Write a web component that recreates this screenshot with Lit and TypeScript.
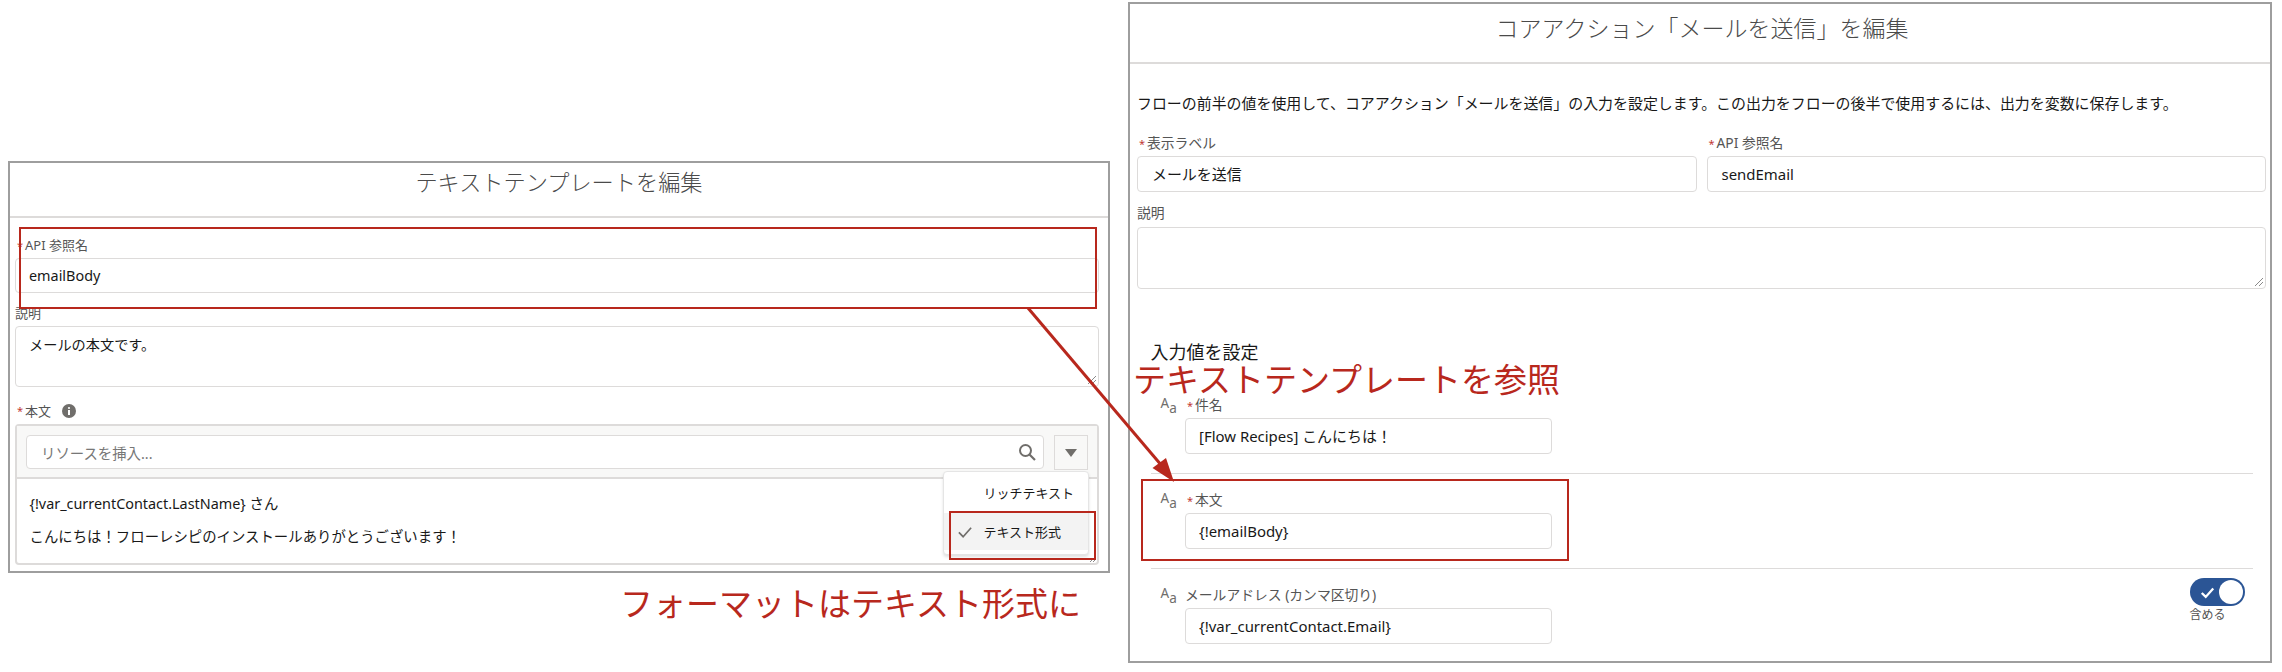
import { LitElement, html, css, svg } from "lit";
import { customElement } from "lit/decorators.js";

const check = (color: string, w: number) => svg`<path d="M2 8.5 L6.5 13 L15 3.5" fill="none" stroke=${color} stroke-width=${w} />`;

@customElement("app-root")
export class AppRoot extends LitElement {
  static styles = css`
    :host {
      display: block;
      font-family: "Noto Sans", "Noto Sans CJK JP", sans-serif;
      color: #181818;
    }
    * {
      box-sizing: border-box;
    }
    .page {
      position: relative;
      display: flex;
      align-items: flex-start;
      width: 2282px;
      height: 672px;
      overflow: hidden;
      background: #fff;
    }
    .left-col {
      width: 1102px;
      margin: 161px 0 0 8px;
    }
    .panel {
      border: 2px solid #9e9e9e;
      background: #fff;
    }
    .left-panel {
      height: 412px;
      font-size: 14.4px;
    }
    .right-panel {
      width: 1144px;
      height: 661px;
      margin: 2px 0 0 18px;
      font-size: 14.95px;
    }
    .head {
      border-bottom: 2px solid #dddbda;
      text-align: center;
      line-height: 40px;
      color: #4a4a4a;
      font-weight: 300;
    }
    .left-panel .head {
      height: 55px;
      font-size: 22.2px;
    }
    .right-panel .head {
      height: 60px;
      padding: 4px 0 0 4px;
      font-size: 23px;
    }
    .left-body {
      padding: 18px 9px 0 5px;
    }
    .right-body {
      padding: 29px 4px 0 7px;
    }
    .label {
      height: 18px;
      line-height: 18px;
      font-size: 13px;
      color: #555;
      white-space: nowrap;
    }
    .right-panel .label {
      font-size: 13.8px;
    }
    .star {
      display: inline-block;
      width: 8px;
      margin-left: 2px;
      color: #c23934;
      font-size: 11px;
    }
    .input {
      display: flex;
      align-items: center;
      height: 36px;
      margin-top: 4px;
      padding: 0 0 1px 14px;
      border: 1px solid #dddbda;
      border-radius: 4px;
      background: #fff;
      white-space: nowrap;
    }
    .left-panel .input {
      height: 35px;
      padding: 0 0 0 13px;
    }
    .field .input {
      padding-left: 13px;
    }
    .area {
      position: relative;
      height: 61px;
      margin-top: 4px;
      padding: 8px 13px;
      font-size: 14.2px;
      line-height: 20px;
      border: 1px solid #dddbda;
      border-radius: 4px;
    }
    .right-panel .area {
      height: 62px;
      margin-top: 5px;
    }
    .grip {
      position: absolute;
      right: 1px;
      bottom: 1px;
      width: 10px;
      height: 10px;
    }
    .after-input {
      margin-top: 11px;
    }
    .after-area {
      margin-top: 15px;
      display: flex;
      align-items: center;
    }
    .info {
      width: 14px;
      height: 14px;
      margin-left: 11px;
    }
    .editor {
      position: relative;
      height: 141px;
      margin-top: 4px;
      border: 2px solid #dddbda;
      border-radius: 4px;
    }
    .toolbar {
      display: flex;
      gap: 10px;
      height: 53px;
      padding: 9px 9px 0;
      background: #f8f8f7;
      border-bottom: 2px solid #dddbda;
    }
    .search {
      flex: 1;
      display: flex;
      align-items: center;
      justify-content: space-between;
      height: 34px;
      padding: 0 7px 0 14px;
      background: #fff;
      border: 1px solid #dddbda;
      border-radius: 4px;
      color: #777;
    }
    .search svg {
      width: 18px;
      height: 18px;
    }
    .more {
      display: flex;
      align-items: center;
      justify-content: center;
      width: 34px;
      height: 35px;
      border: 1px solid #dddbda;
    }
    .more svg {
      width: 12px;
      height: 8px;
    }
    .text {
      padding: 8px 0 0 12.5px;
      line-height: 33px;
      white-space: nowrap;
    }
    .menu {
      position: absolute;
      top: 45px;
      right: 8px;
      width: 146px;
      height: 84px;
      background: #fff;
      border: 1px solid #e5e5e5;
      border-radius: 4px;
      box-shadow: 0 2px 3px rgba(0, 0, 0, 0.12);
      font-size: 13px;
    }
    .menu-item {
      display: flex;
      align-items: center;
      gap: 11px;
      height: 41px;
      padding-left: 12.5px;
    }
    .menu-item svg,
    .menu-item .slot {
      width: 16px;
      height: 16px;
      flex: none;
    }
    .menu-item.on {
      height: 37px;
      background: #f3f3f3;
    }
    .corner {
      position: absolute;
      right: 0;
      bottom: 0;
      width: 8px;
      height: 8px;
    }
    .two {
      display: grid;
      grid-template-columns: 1fr 1fr;
      gap: 0 10px;
      margin-top: 21px;
    }
    .intro {
      line-height: 20px;
      white-space: nowrap;
    }
    .desc-label {
      margin-top: 12px;
    }
    .section {
      margin: 52px 0 0 13.5px;
      font-size: 18px;
      line-height: 22px;
    }
    .rows {
      margin: 33px 0 0 13.5px;
      width: 1102px;
    }
    .row {
      display: flex;
      padding-left: 10px;
      height: 95px;
      padding-top: 17px;
      border-bottom: 1px solid #dddbda;
    }
    .row:first-child {
      height: 78px;
      padding-top: 0;
    }
    .row:last-child {
      border-bottom: none;
    }
    .aa {
      display: flex;
      width: 24.5px;
      height: 18px;
      color: #706e6b;
      font-size: 13.5px;
      line-height: 15px;
    }
    .aa span:last-child {
      padding-top: 5px;
    }
    .field {
      width: 367px;
    }
    .toggle-wrap {
      margin: -8px 8px 0 auto;
      width: 55px;
    }
    .toggle {
      display: flex;
      align-items: center;
      justify-content: space-between;
      height: 28px;
      padding: 0 2px 0 10px;
      border-radius: 14px;
      background: #2b5595;
    }
    .toggle svg {
      width: 15px;
      height: 15px;
    }
    .knob {
      width: 24px;
      height: 24px;
      border-radius: 50%;
      background: #fff;
    }
    .toggle-label {
      margin-top: 2px;
      font-size: 12px;
      line-height: 14px;
      color: #555;
    }
    .caption {
      margin: 9px 0 0 612px;
      font-size: 33px;
      line-height: 44px;
      color: #b8281d;
      white-space: nowrap;
    }
    .mark {
      position: absolute;
      border: 2.5px solid #b8281d;
    }
    .mark-api {
      left: 19px;
      top: 227px;
      width: 1078px;
      height: 82px;
    }
    .mark-format {
      left: 949px;
      top: 511px;
      width: 147px;
      height: 49px;
    }
    .mark-body {
      left: 1141px;
      top: 479px;
      width: 428px;
      height: 82px;
    }
    .ref-note {
      position: absolute;
      left: 1133px;
      top: 358px;
      font-size: 33px;
      line-height: 44px;
      color: #b8281d;
      white-space: nowrap;
    }
    .arrow {
      position: absolute;
      left: 0;
      top: 0;
      width: 2282px;
      height: 672px;
      pointer-events: none;
    }
  `;

  private grip() {
    return html`<svg class="grip" viewBox="0 0 10 10">
      <path d="M1 9 L9 1 M5 9 L9 5" stroke="#8a8a8a" stroke-width="1" fill="none" />
    </svg>`;
  }

  private star() {
    return html`<span class="star">*</span>`;
  }

  private aa() {
    return html`<div class="aa"><span>A</span><span>a</span></div>`;
  }

  private leftPanel() {
    return html`<div class="panel left-panel">
      <div class="head">テキストテンプレートを編集</div>
      <div class="left-body">
        <div class="label">${this.star()}API 参照名</div>
        <div class="input">emailBody</div>
        <div class="label after-input">説明</div>
        <div class="area">メールの本文です。${this.grip()}</div>
        <div class="label after-area">
          ${this.star()}本文
          <svg class="info" viewBox="0 0 14 14">
            <circle cx="7" cy="7" r="7" fill="#706e6b" />
            <rect x="6" y="6" width="2" height="5" fill="#fff" />
            <circle cx="7" cy="4" r="1.1" fill="#fff" />
          </svg>
        </div>
        <div class="editor">
          <div class="toolbar">
            <div class="search">
              リソースを挿入...
              <svg viewBox="0 0 18 18">
                <circle cx="7.5" cy="7.5" r="5.5" fill="none" stroke="#706e6b" stroke-width="2" />
                <path d="M11.5 11.5 L17 17" stroke="#706e6b" stroke-width="2.2" />
              </svg>
            </div>
            <div class="more">
              <svg viewBox="0 0 12 8"><path d="M0 0 H12 L6 8 Z" fill="#706e6b" /></svg>
            </div>
          </div>
          <div class="text">
            <div>{!var_currentContact.LastName} さん</div>
            <div>こんにちは！フローレシピのインストールありがとうございます！</div>
          </div>
          <div class="menu">
            <div class="menu-item"><span class="slot"></span>リッチテキスト</div>
            <div class="menu-item on">
              <svg viewBox="0 0 17 16">${check("#706e6b", 1.8)}</svg>テキスト形式
            </div>
          </div>
          <svg class="corner" viewBox="0 0 8 8">
            <path d="M1 7 L7 1 M4 7 L7 4" stroke="#8a8a8a" stroke-width="1" fill="none" />
          </svg>
        </div>
      </div>
    </div>`;
  }

  private row(label: string, required: boolean, value: string, toggle = false) {
    return html`<div class="row">
      ${this.aa()}
      <div class="field">
        <div class="label">${required ? this.star() : ""}${label}</div>
        <div class="input">${value}</div>
      </div>
      ${toggle
        ? html`<div class="toggle-wrap">
            <div class="toggle">
              <svg viewBox="0 0 17 16">${check("#fff", 2.6)}</svg>
              <div class="knob"></div>
            </div>
            <div class="toggle-label">含める</div>
          </div>`
        : ""}
    </div>`;
  }

  private rightPanel() {
    return html`<div class="panel right-panel">
      <div class="head">コアアクション「メールを送信」を編集</div>
      <div class="right-body">
        <div class="intro">
          フローの前半の値を使用して、コアアクション「メールを送信」の入力を設定します。この出力をフローの後半で使用するには、出力を変数に保存します。
        </div>
        <div class="two">
          <div>
            <div class="label">${this.star()}表示ラベル</div>
            <div class="input">メールを送信</div>
          </div>
          <div>
            <div class="label">${this.star()}API 参照名</div>
            <div class="input">sendEmail</div>
          </div>
        </div>
        <div class="label desc-label">説明</div>
        <div class="area">${this.grip()}</div>
        <div class="section">入力値を設定</div>
        <div class="rows">
          ${this.row("件名", true, "[Flow Recipes] こんにちは！")}
          ${this.row("本文", true, "{!emailBody}")}
          ${this.row("メールアドレス (カンマ区切り)", false, "{!var_currentContact.Email}", true)}
        </div>
      </div>
    </div>`;
  }

  render() {
    return html`<div class="page">
      <div class="left-col">
        ${this.leftPanel()}
        <div class="caption">フォーマットはテキスト形式に</div>
      </div>
      ${this.rightPanel()}
      <div class="mark mark-api"></div>
      <div class="mark mark-format"></div>
      <div class="mark mark-body"></div>
      <div class="ref-note">テキストテンプレートを参照</div>
      <svg class="arrow" viewBox="0 0 2282 672">
        <path d="M1028 308 L1162 466" stroke="#b8281d" stroke-width="3" fill="none" />
        <path d="M1174 482 L1152.5 468 L1166 458 Z" fill="#b8281d" />
      </svg>
    </div>`;
  }
}
